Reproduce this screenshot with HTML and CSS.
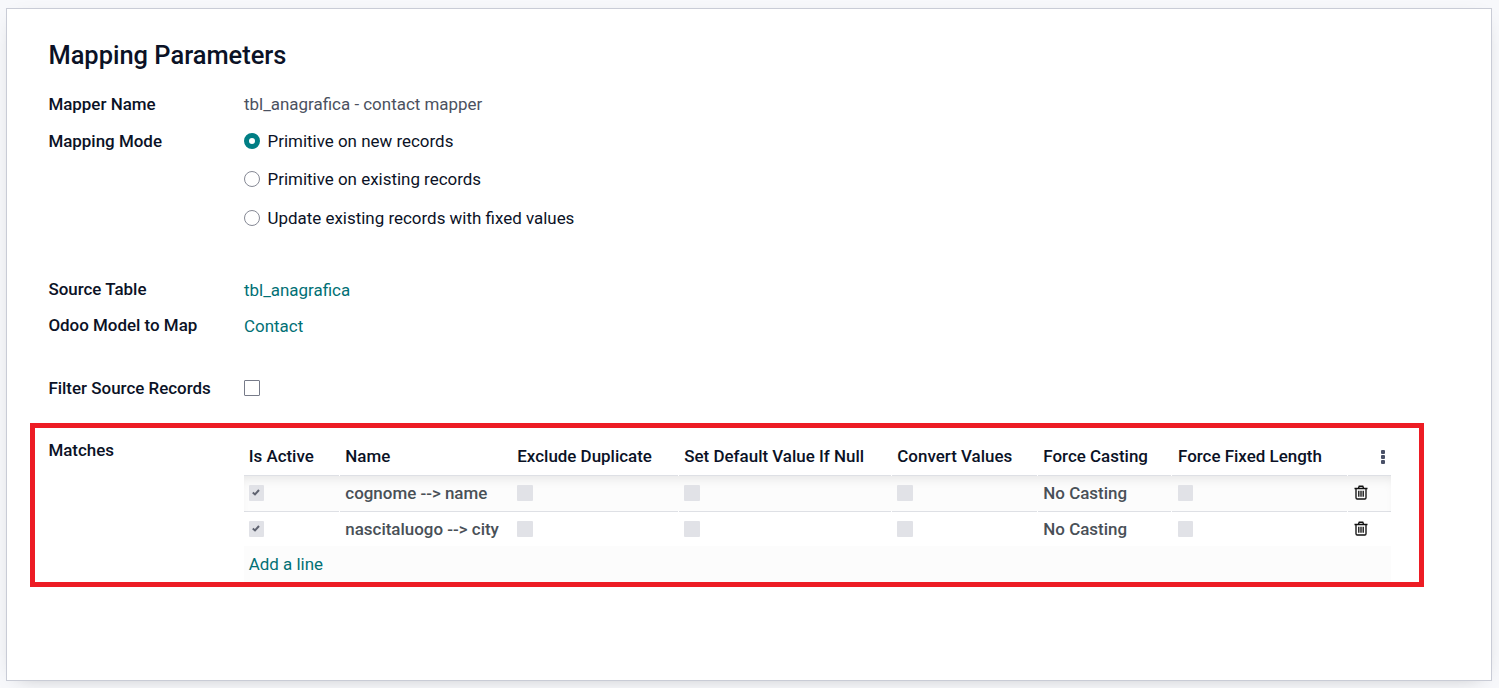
FILE: index.html
```html
<!DOCTYPE html>
<html lang="en">
<head>
<meta charset="utf-8">
<title>Mapping Parameters</title>
<link rel="stylesheet" href="styles.css">
</head>
<body>
<svg class="defs" aria-hidden="true">
  <symbol id="trash" viewBox="0 0 14 15">
    <path d="M0.5 3.5H13.5M4.4 3.2L5.2 1.2H8.8L9.6 3.2M2 3.5V12.7Q2 14 3.2 14H10.8Q12 14 12 12.7V3.5M4.8 5.7V11.8M7 5.7V11.8M9.2 5.7V11.8" fill="none" stroke="currentColor" stroke-width="1.35"/>
  </symbol>
  <symbol id="check" viewBox="0 0 8 7">
    <path d="M0.8 3.4L3 5.4L7 1" fill="none" stroke="currentColor" stroke-width="2"/>
  </symbol>
</svg>
<main class="sheet">
  <h1 class="title">Mapping Parameters</h1>
  <div class="field name"><span class="label">Mapper Name</span><span class="muted">tbl_anagrafica - contact mapper</span></div>
  <div class="field mode">
    <span class="label">Mapping Mode</span>
    <div class="options">
      <label class="option"><span class="radio checked"></span><span>Primitive on new records</span></label>
      <label class="option"><span class="radio"></span><span>Primitive on existing records</span></label>
      <label class="option"><span class="radio"></span><span>Update existing records with fixed values</span></label>
    </div>
  </div>
  <div class="field source"><span class="label">Source Table</span><a class="link">tbl_anagrafica</a></div>
  <div class="field model"><span class="label">Odoo Model to Map</span><a class="link">Contact</a></div>
  <div class="field filter"><span class="label">Filter Source Records</span><span class="checkbox"></span></div>
  <section class="matches">
    <span class="label">Matches</span>
    <div class="list">
      <div class="row head">
        <span class="cell">Is Active</span><span class="cell">Name</span><span class="cell">Exclude Duplicate</span><span class="cell">Set Default Value If Null</span><span class="cell">Convert Values</span><span class="cell">Force Casting</span><span class="cell">Force Fixed Length</span><span class="cell more"><i class="dot"></i><i class="dot"></i><i class="dot"></i></span>
      </div>
      <div class="row first">
        <span class="cell"><span class="box narrow"><svg class="check"><use href="#check"/></svg></span></span><span class="cell">cognome --&gt; name</span><span class="cell"><span class="box"></span></span><span class="cell"><span class="box"></span></span><span class="cell"><span class="box"></span></span><span class="cell">No Casting</span><span class="cell"><span class="box narrow"></span></span><span class="cell"><svg class="trash"><use href="#trash"/></svg></span>
      </div>
      <div class="row second">
        <span class="cell"><span class="box narrow"><svg class="check"><use href="#check"/></svg></span></span><span class="cell">nascitaluogo --&gt; city</span><span class="cell"><span class="box"></span></span><span class="cell"><span class="box"></span></span><span class="cell"><span class="box"></span></span><span class="cell">No Casting</span><span class="cell"><span class="box narrow"></span></span><span class="cell"><svg class="trash"><use href="#trash"/></svg></span>
      </div>
      <div class="add"><a class="link">Add a line</a></div>
    </div>
  </section>
</main>
</body>
</html>
```
FILE: styles.css
```css
* { box-sizing: border-box; }
body {
  margin: 0;
  height: 688px;
  padding: 8px 7px 7px 6px;
  overflow: hidden;
  background: #f7f8fb;
  color: #0b1226;
  font: 400 16.95px/20px Roboto, sans-serif;
  white-space: nowrap;
}
.defs { position: absolute; width: 0; height: 0; }
.sheet {
  width: 1486px;
  height: 673px;
  padding: 31px 0 0 41.4px;
  border: 1px solid #c9ccd6;
  background: #fff;
  box-shadow: 0 5px 20px -12px rgba(0, 0, 0, 0.35);
}
.title { margin: 0; font-size: 25.45px; line-height: 31px; font-weight: 500; }
.label { font-weight: 500; }
.muted { color: #4b5160; }
.link { color: #017075; }
.field { display: grid; grid-template-columns: 195.6px 1fr; align-items: start; }
.name { margin-top: 23px; }
.mode { margin-top: 17px; }
.options { display: flex; flex-direction: column; gap: 18.4px; }
.option { display: flex; align-items: flex-start; gap: 7.5px; height: 20px; }
.radio { width: 16px; height: 16px; margin-top: 2px; border: 1px solid #868995; border-radius: 50%; background: #fff; }
.radio.checked { border: 5px solid #017e84; }
.source { margin-top: 51.2px; }
.model { margin-top: 15px; }
.source .link, .model .link { padding-top: 1px; }
.filter { margin-top: 42px; }
.checkbox { width: 16px; height: 16px; margin-top: 2px; border: 1px solid #777b89; border-radius: 1px; }
.matches {
  display: grid;
  grid-template-columns: 209px 1147px;
  width: 1394px;
  height: 164px;
  margin: 25px 0 0 -18.4px;
  border: 5px solid #ed1c24;
}
.matches > .label { padding: 12px 0 0 13.4px; }
.row {
  display: grid;
  grid-template-columns: 96px 172px 167px 213px 146px 134px 176px 43px;
}
.cell { display: flex; align-items: center; padding-left: 5.3px; font-weight: 500; color: #495057; }
.cell:first-child { padding-left: 4.7px; }
.head { height: 48px; }
.head .cell { padding-top: 8px; color: #0b1226; }
.head, .first {
  background-image: linear-gradient(90deg, transparent 95px, #fff 95px 96px, transparent 96px 434px, #fff 434px 435px, transparent 435px 647px, #fff 647px 648px, transparent 648px 793px, #fff 793px 794px, transparent 794px 927px, #fff 927px 928px, transparent 928px 1103px, #fff 1103px 1104px, transparent 1104px), linear-gradient(#dee0e5, #dee0e5);
  background-size: 100% 1px;
  background-position: left bottom;
  background-repeat: no-repeat;
}
.first {
  height: 36px;
  background-color: #fcfcfc;
  box-shadow: inset 0 8px 12px -6px rgba(0, 0, 0, 0.1);
}
.first .cell { padding-bottom: 2px; }
.second { height: 34px; }
.row .cell:nth-child(7) { padding-left: 6px; }
.row:not(.head) .cell:last-child { padding-left: 6px; }
.box { display: flex; align-items: center; justify-content: center; width: 16px; height: 16px; background: #e1e2e7; border-radius: 1px; }
.box.narrow { width: 15px; }
.check { width: 8px; height: 7px; color: #5f6370; }
.trash { width: 14px; height: 15px; color: #111; }
.head .more { flex-direction: column; justify-content: center; gap: 1px; padding: 10px 0 0 26px; }
.dot { width: 4px; height: 4px; background: #495067; border-radius: 1px; }
.add { display: flex; align-items: center; height: 36px; padding-left: 4.7px; background: #fcfcfc; }
```
